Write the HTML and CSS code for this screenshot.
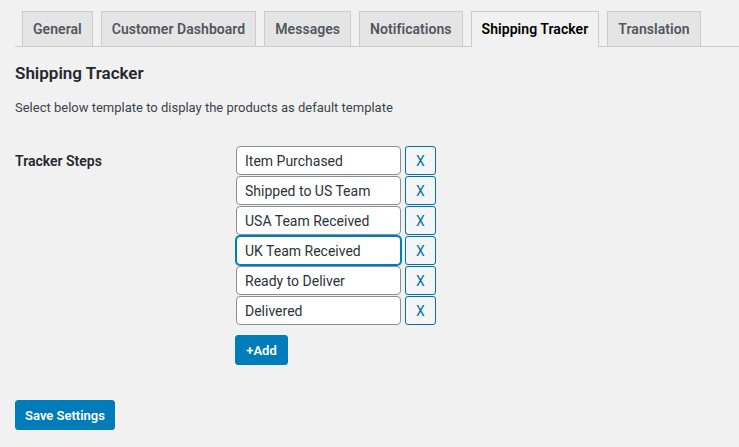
FILE: index.html
```html
<!DOCTYPE html>
<html>
<head>
<meta charset="utf-8">
<link rel="stylesheet" href="styles.css">
</head>
<body>
<div class="wrap">
  <nav class="tabs">
    <span class="tab">General</span>
    <span class="tab">Customer Dashboard</span>
    <span class="tab">Messages</span>
    <span class="tab">Notifications</span>
    <span class="tab active">Shipping Tracker</span>
    <span class="tab">Translation</span>
  </nav>
  <h2 class="title">Shipping Tracker</h2>
  <p class="desc">Select below template to display the products as default template</p>
  <div class="form-row">
    <div class="label">Tracker Steps</div>
    <div class="steps">
      <div class="step"><input class="field" value="Item Purchased"><button class="remove">X</button></div>
      <div class="step"><input class="field" value="Shipped to US Team"><button class="remove">X</button></div>
      <div class="step"><input class="field" value="USA Team Received"><button class="remove">X</button></div>
      <div class="step"><input class="field focus" value="UK Team Received"><button class="remove">X</button></div>
      <div class="step"><input class="field" value="Ready to Deliver"><button class="remove">X</button></div>
      <div class="step"><input class="field" value="Delivered"><button class="remove">X</button></div>
      <button class="primary add">+Add</button>
    </div>
  </div>
  <button class="primary save">Save Settings</button>
</div>
</body>
</html>
```

FILE: styles.css
```css
* { box-sizing: border-box; }
html, body { margin: 0; padding: 0; background: #f1f1f1; }
body {
  font-family: Roboto, "Liberation Sans", sans-serif;
  font-size: 13px;
  color: #23282d;
}
.wrap { padding: 11px 0 0 15px; }
.tabs {
  display: flex;
  border-bottom: 1px solid #cccccc;
  padding-left: 7px;
  gap: 8px;
}
.tab {
  display: block;
  height: 35px;
  padding: 0 10px;
  line-height: 34px;
  font-size: 14px;
  font-weight: 600;
  letter-spacing: 0.05px;
  color: #50575e;
  background: #e5e5e5;
  border: 1px solid #cccccc;
  border-bottom: none;
  margin-bottom: -1px;
}
.tab.active {
  background: #f1f1f1;
  color: #000;
  height: 36px;
}
.title {
  margin: 14px 0 0;
  font-size: 17px;
  font-weight: 600;
  line-height: 24px;
  color: #23282d;
}
.desc {
  margin: 13px 0 0;
  line-height: 20px;
  color: #3c434a;
}
.form-row {
  display: flex;
  margin-top: 28px;
}
.label {
  width: 221px;
  font-size: 14px;
  font-weight: 600;
  padding-top: 5px;
  line-height: 20px;
}
.steps { display: flex; flex-direction: column; }
.step { display: flex; gap: 4px; margin-bottom: 1px; }
.field {
  width: 165px;
  height: 29px;
  border: 1px solid #8c8f94;
  border-radius: 4px;
  padding: 0 8px;
  font-family: inherit;
  font-size: 14px;
  color: #2c3338;
  background: #fff;
  outline: none;
}
.field.focus {
  border-color: #007cba;
  box-shadow: 0 0 0 1px #007cba;
}
.remove {
  width: 31px;
  height: 29px;
  border: 1px solid #0071a1;
  border-radius: 3px;
  background: #f3f5f6;
  color: #0071a1;
  font-family: inherit;
  font-size: 14px;
  padding: 0;
}
.primary {
  background: #007cba;
  border: 1px solid #007cba;
  border-radius: 3px;
  color: #fff;
  font-family: inherit;
  font-size: 13px;
  font-weight: 600;
  height: 30px;
  padding: 0 10px;
}
.add { align-self: flex-start; margin-top: 9px; width: 53px; padding: 0; margin-left: -1px; }
.save { margin-top: 35px; width: 100px; padding: 0; }
```
